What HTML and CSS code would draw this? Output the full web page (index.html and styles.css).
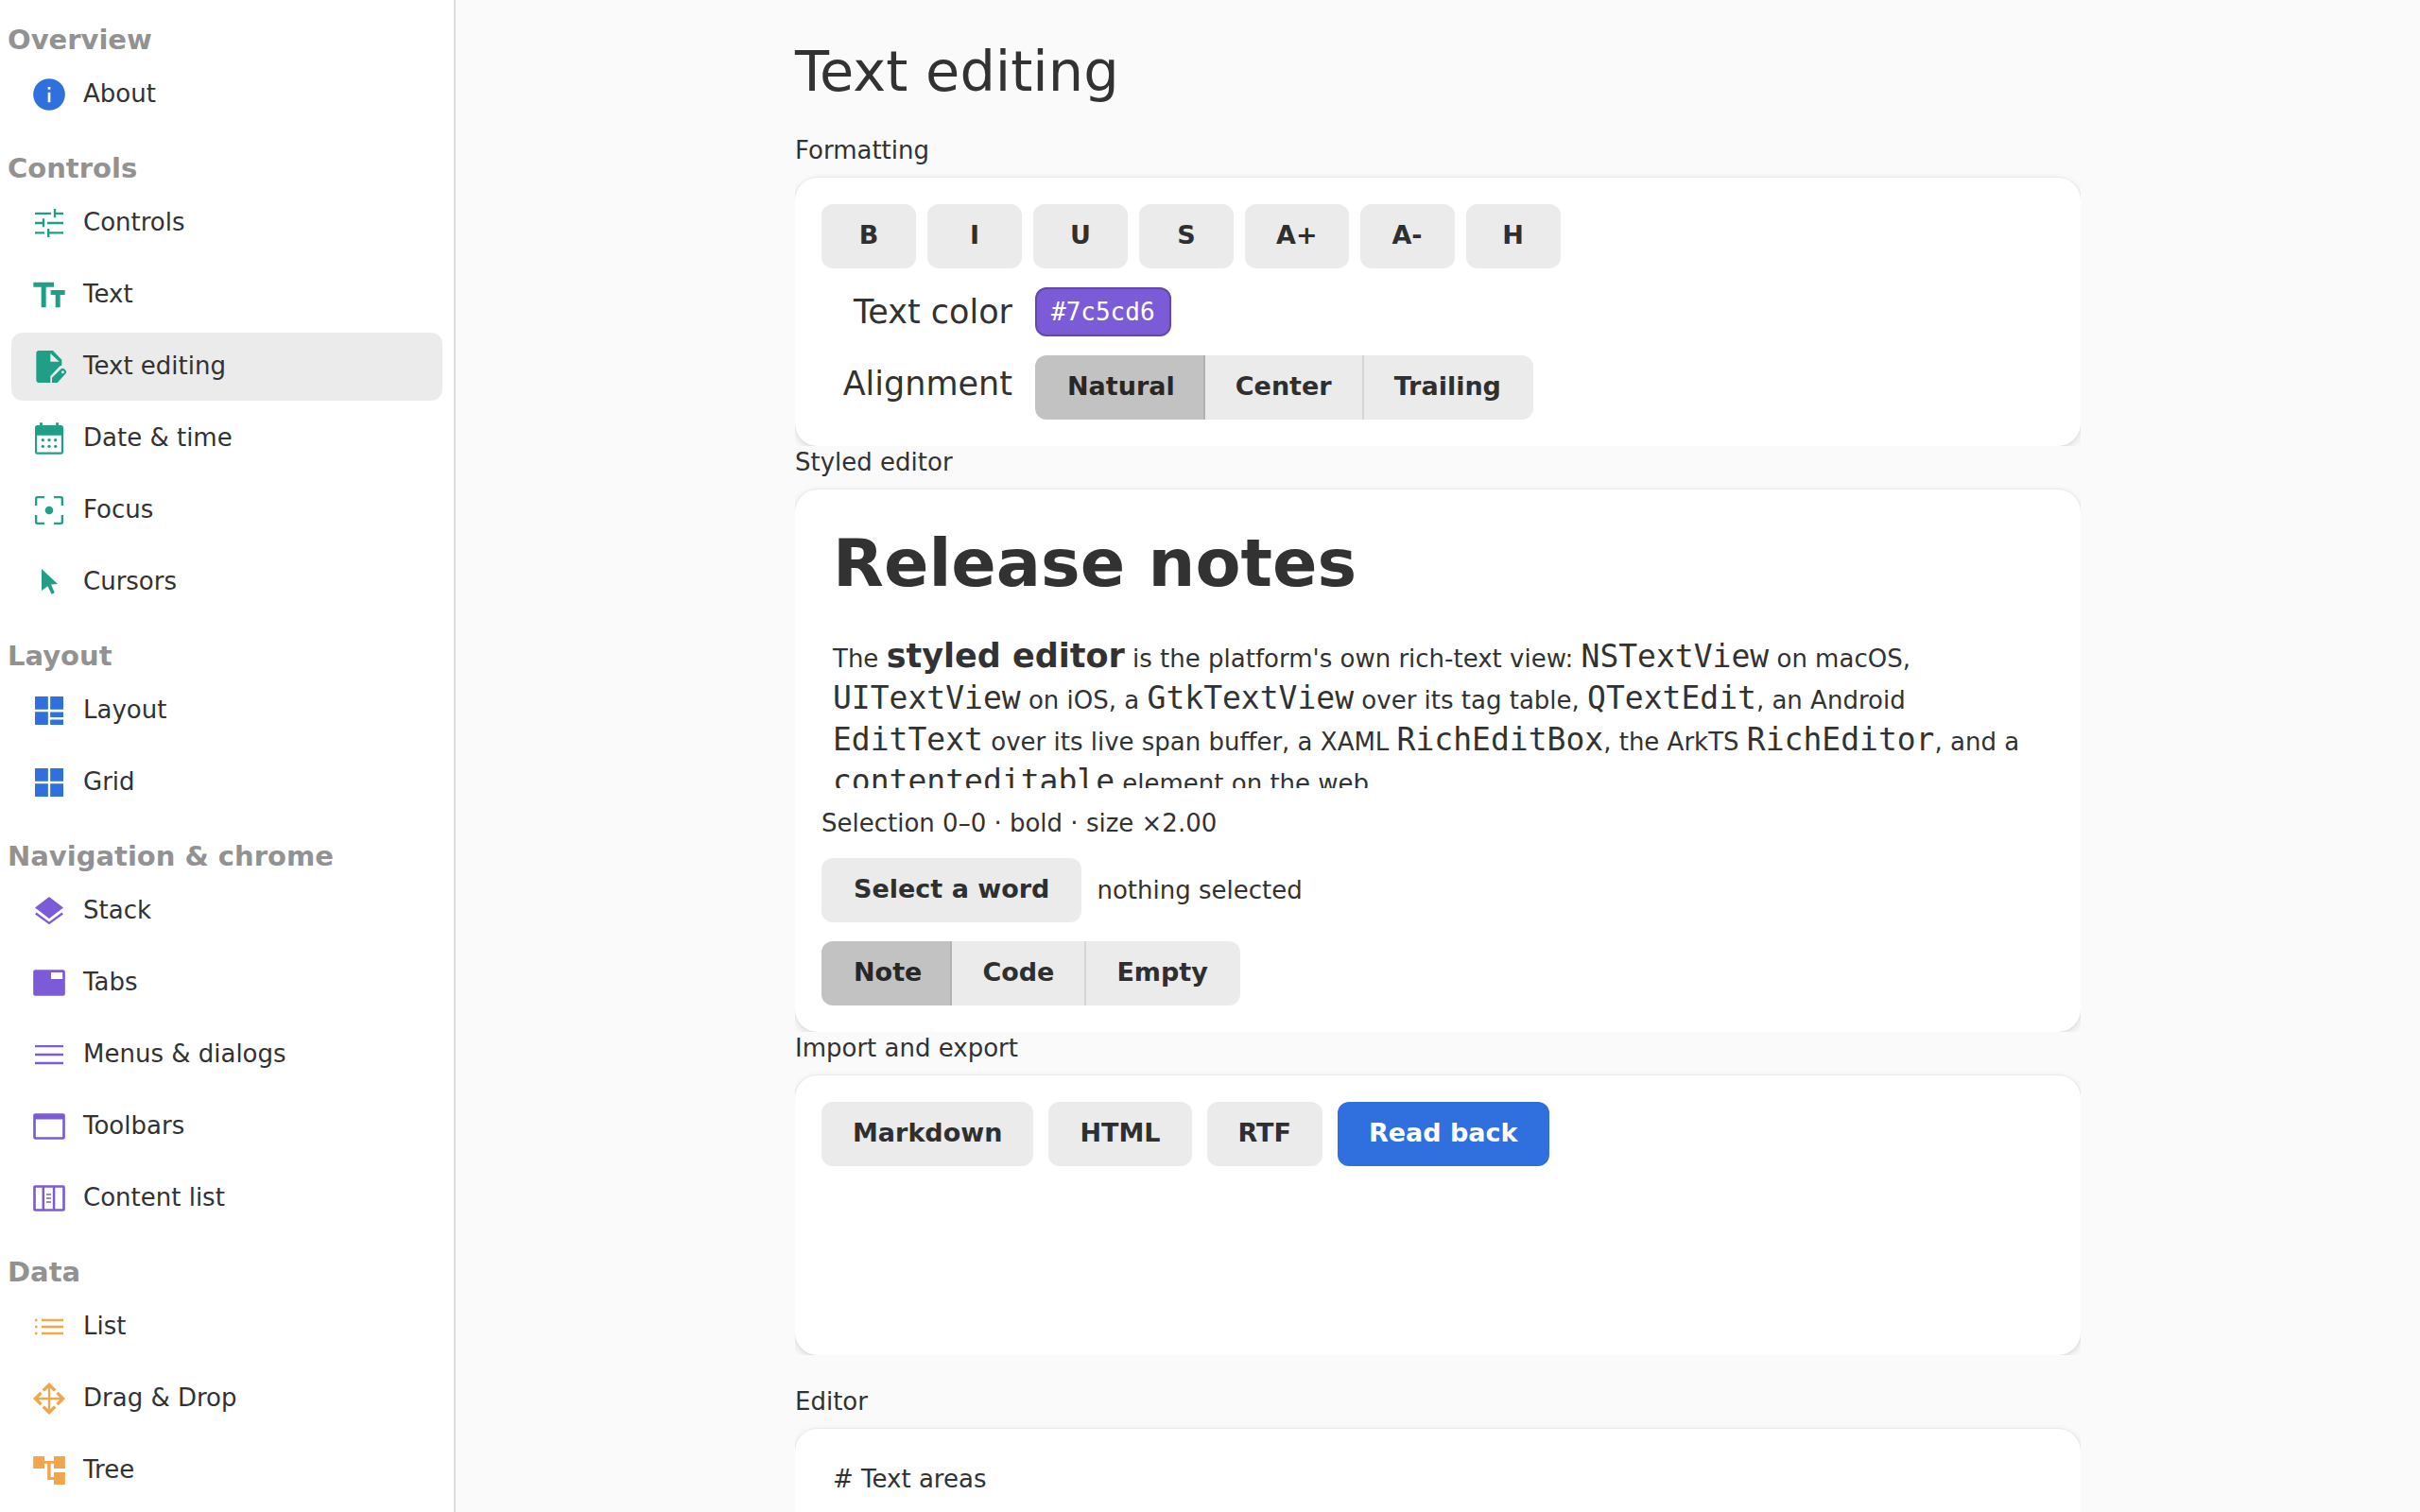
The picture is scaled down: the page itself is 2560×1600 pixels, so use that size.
FILE: index.html
```html
<!DOCTYPE html>
<html lang="en">
<head>
    <meta charset="UTF-8">
    <meta name="viewport" content="width=device-width, initial-scale=1.0">
    <title>Text editing</title>
    <link rel="stylesheet" href="styles.css">
</head>
<body>
    <nav class="sidebar">
        <h2 class="nav-heading">Overview</h2>
        <ul class="nav-list">
            <li><a class="nav-item" href="#about">
                <svg class="icon blue" viewBox="0 0 24 24"><path fill-rule="evenodd" d="M12 1.900a10.100 10.100 0 1 0 0 20.200 10.100 10.100 0 0 0 0-20.200zM11.200 7.200h1.600v1.600h-1.600zM11.200 10.600h1.600V17h-1.600z"/></svg>
                About</a></li>
        </ul>

        <h2 class="nav-heading">Controls</h2>
        <ul class="nav-list">
            <li><a class="nav-item" href="#controls">
                <svg class="icon teal line" viewBox="0 0 24 24"><path d="M3 5.900h10.200M15.600 3v5.500M15.600 5.900H21M3 12h5.400M8.400 9.200v5.400M10.800 12H21M3 18.200h6M11.500 15.600V21M11.500 18.200H21"/></svg>
                Controls</a></li>
            <li><a class="nav-item" href="#text">
                <svg class="icon teal" viewBox="0 0 24 24"><path d="M2 4v3h5v13h3V7h5V4zM13 9v3h3v8h3v-8h3V9z"/></svg>
                Text</a></li>
            <li><a class="nav-item active" href="#text-editing" aria-current="page">
                <svg class="icon teal" viewBox="0 0 24 24"><path fill-rule="evenodd" d="M5.400 1.800h9L20 7.600v3.700c-.8.1-1.400.5-2 1.100l-5.200 5.600v4.200H5.400c-.9 0-1.600-.7-1.600-1.600V3.400c0-.9.700-1.600 1.600-1.600zM12.800 3.600v5.200h5.600zM13.800 22.200V19l5.500-5.400c.8-.8 1.700-.8 2.500 0l.6.600c.7.800.7 1.500 0 2.300l-5.200 5.700zM20.600 14.600a.9.900 0 1 0 .1 0z"/></svg>
                Text editing</a></li>
            <li><a class="nav-item" href="#date-time">
                <svg class="icon teal" viewBox="0 0 24 24"><path fill-rule="evenodd" d="M6 2h1.700v1.600h8.600V2H18v1.600h1.600c.8 0 1.400.6 1.400 1.400v15.600c0 .8-.6 1.400-1.400 1.400H4.400c-.8 0-1.400-.6-1.400-1.400V5c0-.8.600-1.400 1.400-1.400H6zM4.300 10v10.700h15.400V10z"/><circle cx="8" cy="13" r="1"/><circle cx="12" cy="13" r="1"/><circle cx="16" cy="13" r="1"/><circle cx="8" cy="17" r="1"/><circle cx="12" cy="17" r="1"/><circle cx="16" cy="17" r="1"/></svg>
                Date &amp; time</a></li>
            <li><a class="nav-item" href="#focus">
                <svg class="icon teal" viewBox="0 0 24 24"><path class="stroke" d="M3.700 9V4.500q0-.8.800-.8H9M15 3.700h4.500q.8 0 .8.800V9M20.300 15v4.500q0 .8-.8.800H15M9 20.300H4.500q-.8 0-.8-.8V15"/><circle cx="12" cy="12" r="2.600"/></svg>
                Focus</a></li>
            <li><a class="nav-item" href="#cursors">
                <svg class="icon teal" viewBox="0 0 24 24"><path d="M7.200 3.600l10.200 9.600-4.200.3 2.300 5.300-2 .9-2.400-5.200-3.900 2.900z"/></svg>
                Cursors</a></li>
        </ul>

        <h2 class="nav-heading">Layout</h2>
        <ul class="nav-list">
            <li><a class="nav-item" href="#layout">
                <svg class="icon blue" viewBox="0 0 24 24"><path d="M3 3h8.300v8.300H3zM12.700 3H21v8.300h-8.300zM3 12.700h8.300V21H3zM12.700 12.900H21v3.300h-8.300zM12.700 17.700H21V21h-8.300z"/></svg>
                Layout</a></li>
            <li><a class="nav-item" href="#grid">
                <svg class="icon blue" viewBox="0 0 24 24"><path d="M3 3h8.300v8.300H3zM12.700 3H21v8.300h-8.300zM3 12.700h8.300V21H3zM12.700 12.700H21V21h-8.300z"/></svg>
                Grid</a></li>
        </ul>

        <h2 class="nav-heading">Navigation &amp; chrome</h2>
        <ul class="nav-list">
            <li><a class="nav-item" href="#stack">
                <svg class="icon purple" viewBox="0 0 24 24"><path d="M12 3l9 6.900-9 6.900-9-6.900z"/><path class="stroke" d="M3.500 13.500l8.500 6.200 8.500-6.200"/></svg>
                Stack</a></li>
            <li><a class="nav-item" href="#tabs">
                <svg class="icon purple" viewBox="0 0 24 24"><path fill-rule="evenodd" d="M3.200 3.800h17.600c.8 0 1.300.5 1.300 1.300v13.800c0 .8-.5 1.300-1.300 1.300H3.200c-.8 0-1.300-.5-1.300-1.300V5.100c0-.8.500-1.300 1.300-1.300zM13.200 5.400v4.200h7.300V5.400z"/></svg>
                Tabs</a></li>
            <li><a class="nav-item" href="#menus">
                <svg class="icon purple line" viewBox="0 0 24 24"><path d="M3 6.700h18M3 12h18M3 17.400h18"/></svg>
                Menus &amp; dialogs</a></li>
            <li><a class="nav-item" href="#toolbars">
                <svg class="icon purple" viewBox="0 0 24 24"><path fill-rule="evenodd" d="M3.200 3.800h17.600c.8 0 1.300.5 1.300 1.300v13.800c0 .8-.5 1.300-1.300 1.300H3.200c-.8 0-1.300-.5-1.300-1.300V5.100c0-.8.500-1.300 1.300-1.300zM3.500 7.500v11.200h17V7.500z"/></svg>
                Toolbars</a></li>
            <li><a class="nav-item" href="#content-list">
                <svg class="icon purple" viewBox="0 0 24 24"><path fill-rule="evenodd" d="M3.200 3.800h17.600c.8 0 1.300.5 1.300 1.300v13.800c0 .8-.5 1.300-1.300 1.300H3.200c-.8 0-1.300-.5-1.300-1.300V5.100c0-.8.500-1.300 1.300-1.300zM3.500 5.300v13.400h4V5.300zM9 5.300v13.400h5.300V5.300zM15.800 5.300v13.400h4.700V5.300zM10.200 9.100h3V10h-3zM10.200 11.500h3v.9h-3zM10.200 13.900h3v.9h-3z"/></svg>
                Content list</a></li>
        </ul>

        <h2 class="nav-heading">Data</h2>
        <ul class="nav-list">
            <li><a class="nav-item" href="#list">
                <svg class="icon orange line" viewBox="0 0 24 24"><path d="M3 7.800h1.500M3 12h1.500M3 16.200h1.500M7.200 7.800H21M7.200 12H21M7.200 16.200H21"/></svg>
                List</a></li>
            <li><a class="nav-item" href="#drag-drop">
                <svg class="icon orange line" viewBox="0 0 24 24"><path d="M12 3.500v17M3.500 12h17"/><path class="heads" d="M8.300 6.900L12 3.200l3.700 3.700M8.300 17.100l3.700 3.700 3.700-3.700M6.900 8.300L3.200 12l3.700 3.700M17.100 8.300l3.700 3.700-3.700 3.700"/></svg>
                Drag &amp; Drop</a></li>
            <li><a class="nav-item" href="#tree">
                <svg class="icon orange" viewBox="0 0 24 24"><path d="M1.900 3H9v3h6V3h7.100v7.800H15V7.700h-2v8.700h2v-3.200h7.100V21H15v-3h-4.100V7.700H9v3.100H1.900z"/></svg>
                Tree</a></li>
        </ul>
    </nav>

    <main class="content">
        <div class="page">
            <h1>Text editing</h1>

            <section>
                <h3>Formatting</h3>
                <div class="card">
                    <div class="toolbar compact narrow">
                        <button type="button">B</button>
                        <button type="button">I</button>
                        <button type="button">U</button>
                        <button type="button">S</button>
                        <button type="button">A+</button>
                        <button type="button">A-</button>
                        <button type="button">H</button>
                    </div>
                    <div class="field">
                        <label class="field-label" for="textColor">Text color</label>
                        <button type="button" class="swatch" id="textColor">#7c5cd6</button>
                    </div>
                    <div class="field field-baseline">
                        <span class="field-label" id="alignLabel">Alignment</span>
                        <div class="segmented" role="group" aria-labelledby="alignLabel">
                            <button type="button" class="selected" aria-pressed="true">Natural</button>
                            <button type="button" aria-pressed="false">Center</button>
                            <button type="button" aria-pressed="false">Trailing</button>
                        </div>
                    </div>
                </div>
            </section>

            <section>
                <h3>Styled editor</h3>
                <div class="card">
                    <div class="editor" contenteditable="true" role="textbox" aria-multiline="true" aria-label="Styled editor" spellcheck="false">
                        <div class="editor-title">Release notes</div>
                        <p>The <b>styled editor</b> is the platform's own rich-text view: <code>NSTextView</code> on macOS, <code>UITextView</code> on iOS, a <code>GtkTextView</code> over its tag table, <code>QTextEdit</code>, an Android <code>EditText</code> over its live span buffer, a XAML <code>RichEditBox</code>, the ArkTS <code>RichEditor</code>, and a <code>contenteditable</code> element on the web.</p>
                    </div>
                    <div class="status">Selection 0–0 · bold · size ×2.00</div>
                    <div class="toolbar">
                        <button type="button">Select a word</button>
                        <span>nothing selected</span>
                    </div>
                    <div class="segmented" role="group" aria-label="Sample">
                        <button type="button" class="selected" aria-pressed="true">Note</button>
                        <button type="button" aria-pressed="false">Code</button>
                        <button type="button" aria-pressed="false">Empty</button>
                    </div>
                </div>
            </section>

            <section>
                <h3>Import and export</h3>
                <div class="card">
                    <div class="toolbar narrow">
                        <button type="button">Markdown</button>
                        <button type="button">HTML</button>
                        <button type="button">RTF</button>
                        <button type="button" class="primary">Read back</button>
                    </div>
                    <output class="export"></output>
                </div>
            </section>

            <section class="spaced">
                <h3><label for="plainEditor">Editor</label></h3>
                <div class="card">
                    <textarea id="plainEditor" rows="8" spellcheck="false"># Text areas</textarea>
                </div>
            </section>
        </div>
    </main>
</body>
</html>
```
FILE: styles.css
```css
* {
    box-sizing: border-box;
}

body {
    margin: 0;
    height: 100vh;
    display: flex;
    overflow: hidden;
    background: #fafafa;
    color: #323232;
    font-family: "DejaVu Sans", sans-serif;
    font-size: 26px;
    line-height: 34px;
}

h1, h2, h3, p, ul {
    margin: 0;
    padding: 0;
}

/* Sidebar */
.sidebar {
    flex: 0 0 482px;
    overflow: hidden;
    background: #ffffff;
    border-right: 2px solid #dcdcdc;
}

.nav-heading {
    padding: 24px 8px 4px;
    font-size: 29px;
    line-height: 36px;
    color: #929292;
}

.nav-list {
    display: flex;
    flex-direction: column;
    gap: 4px;
    padding: 0 12px;
    list-style: none;
}

.nav-item {
    display: flex;
    align-items: center;
    gap: 16px;
    height: 72px;
    padding: 0 20px 2px;
    border-radius: 12px;
    color: inherit;
    text-decoration: none;
}

.nav-item.active {
    background: #ebebeb;
}

.icon {
    width: 40px;
    height: 40px;
    margin-top: 2px;
    fill: currentColor;
}

.icon .stroke,
.icon.line path {
    fill: none;
    stroke: currentColor;
    stroke-width: 1.4;
}

.icon.line .heads {
    stroke-width: 2;
}

.blue { color: #2f6fde; }
.teal { color: #209f86; }
.purple { color: #7c5cd6; }
.orange { color: #f0a64c; }

/* Content */
.content {
    flex: 1;
    overflow: hidden;
}

.page {
    max-width: 1360px;
    margin: 0 auto;
    padding-top: 42px;
}

h1 {
    margin-bottom: 32px;
    font-size: 59px;
    font-weight: normal;
    line-height: 68px;
}

h3 {
    padding-bottom: 12px;
    font-size: 26px;
    font-weight: normal;
}

section {
    overflow: hidden;
}

.spaced {
    margin-top: 32px;
}

.card {
    display: flex;
    flex-direction: column;
    align-items: flex-start;
    gap: 20px;
    padding: 28px;
    background: #ffffff;
    border-radius: 24px;
    box-shadow: 0 0 0 1px rgba(0, 0, 0, 0.03), 0 2px 6px 1px rgba(0, 0, 0, 0.08), 0 4px 12px 2px rgba(0, 0, 0, 0.03);
}

/* Buttons */
button {
    height: 68px;
    padding: 0 34px 2px;
    border: none;
    border-radius: 12px;
    background: #ebebeb;
    color: #2f2f2f;
    font: bold 27px/34px "DejaVu Sans", sans-serif;
    cursor: pointer;
}

button.primary {
    background: #2f6fde;
    color: #ffffff;
}

.toolbar {
    display: flex;
    align-items: center;
    gap: 16px;
}

.toolbar.compact {
    gap: 12px;
}

.narrow button {
    min-width: 100px;
    padding: 0 33px 2px;
}

.segmented {
    display: flex;
}

.segmented button {
    padding: 0 32px 2px;
    border-right: 2px solid #d6d6d6;
    border-radius: 0;
}

.segmented button.selected {
    background: #c2c2c2;
    border-color: #b2b2b2;
    color: #272727;
}

.segmented button:first-child {
    padding: 0 30px 2px 34px;
    border-radius: 12px 0 0 12px;
}

.segmented button:last-child {
    border-right: none;
    border-radius: 0 12px 12px 0;
    padding-right: 34px;
}

.field {
    display: flex;
    align-items: center;
    gap: 24px;
}

.field-baseline {
    align-items: baseline;
}

.field-label {
    width: 202px;
    font-size: 35px;
    line-height: 42px;
    text-align: right;
}

.swatch {
    height: 52px;
    padding: 0 15px;
    border: 2px solid #6248a8;
    background: #7c5cd6;
    color: #ffffff;
    font: 26px/34px "DejaVu Sans Mono", monospace;
}

/* Editors */
.editor {
    align-self: stretch;
    height: 288px;
    padding: 8px 12px;
    overflow: hidden;
    outline: none;
}

.editor-title {
    margin-bottom: 34px;
    font-size: 70px;
    font-weight: bold;
    line-height: 84px;
}

.editor b,
.editor code {
    font-size: 35px;
    line-height: 44px;
}

.editor code {
    font-family: "DejaVu Sans Mono", monospace;
    font-size: 33px;
}

.export {
    align-self: stretch;
    min-height: 152px;
}

textarea {
    align-self: stretch;
    padding: 8px 12px;
    border: none;
    outline: none;
    resize: none;
    background: transparent;
    color: inherit;
    font: inherit;
}
```
